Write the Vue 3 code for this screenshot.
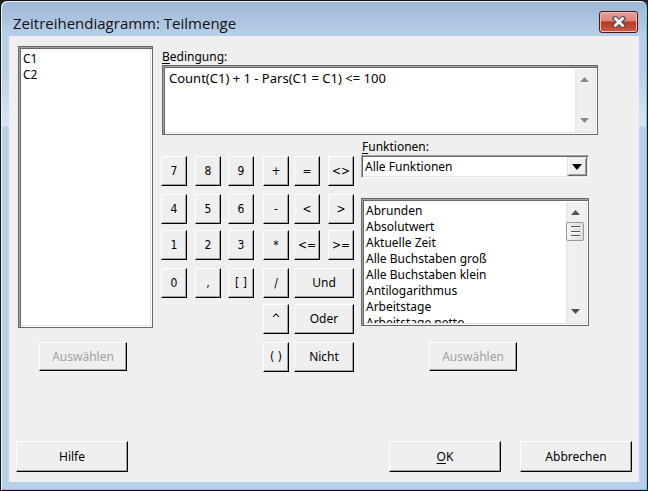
<script setup>
import { ref } from 'vue'

const keys = [
  ['7', 1, 1], ['8', 1, 2], ['9', 1, 3], ['+', 1, 4], ['=', 1, 5], ['<>', 1, 6],
  ['4', 2, 1], ['5', 2, 2], ['6', 2, 3], ['-', 2, 4], ['<', 2, 5], ['>', 2, 6],
  ['1', 3, 1], ['2', 3, 2], ['3', 3, 3], ['*', 3, 4], ['<=', 3, 5], ['>=', 3, 6],
  ['0', 4, 1], [',', 4, 2], ['[ ]', 4, 3], ['/', 4, 4], ['Und', 4, 5],
  ['^', 5, 4], ['Oder', 5, 5],
  ['( )', 6, 4], ['Nicht', 6, 5]
]
const isWord = (text) => /^[A-Z]/.test(text)
const columns = ['C1', 'C2']
const functions = [
  'Abrunden', 'Absolutwert', 'Aktuelle Zeit', 'Alle Buchstaben groß',
  'Alle Buchstaben klein', 'Antilogarithmus', 'Arbeitstage', 'Arbeitstage netto'
]
const condition = ref('Count(C1) + 1 - Pars(C1 = C1) <= 100')
const category = ref('Alle Funktionen')
const selectedColumn = ref(null)
const selectedFunction = ref(null)
</script>

<template>
  <main class="window">
    <header class="titlebar">
      <h1>Zeitreihendiagramm: Teilmenge</h1>
      <button class="close" type="button" aria-label="Schließen">
        <svg width="14" height="12" viewBox="0 0 14 12">
          <path d="M3.2 2.4L10.8 9.6M10.8 2.4L3.2 9.6" stroke="#4b4350" stroke-width="4.8" stroke-linecap="square" />
          <path d="M3.4 2.6L10.6 9.4M10.6 2.6L3.4 9.4" stroke="#f6f6f6" stroke-width="2.8" stroke-linecap="square" />
        </svg>
      </button>
    </header>

    <form class="content" @submit.prevent>
      <div class="upper">
        <section class="variables">
          <div class="sunken variable-box">
            <select v-model="selectedColumn" class="list" size="17" aria-label="Variablen">
              <option v-for="c in columns" :key="c">{{ c }}</option>
            </select>
          </div>
          <button class="btn pick" type="button" :disabled="!selectedColumn">Auswählen</button>
        </section>

        <section class="editor">
          <label for="condition"><u>B</u>edingung:</label>
          <div class="sunken condition-box">
            <textarea id="condition" v-model="condition" spellcheck="false"></textarea>
            <div class="scroll" aria-hidden="true">
              <svg class="arrow faded" viewBox="0 0 9 5"><path d="M4.5 0L9 5H0Z" /></svg>
              <svg class="arrow faded" viewBox="0 0 9 5"><path d="M0 0H9L4.5 5Z" /></svg>
            </div>
          </div>

          <div class="lower">
            <div class="keypad">
              <button
                v-for="[text, row, col] in keys"
                :key="text"
                type="button"
                class="btn key"
                :class="{ wide: isWord(text) }"
                :style="{ gridRow: row, gridColumn: col }"
              >{{ text }}</button>
            </div>

            <div class="functions">
              <label for="category"><u>F</u>unktionen:</label>
              <div class="combo">
                <select id="category" v-model="category">
                  <option>Alle Funktionen</option>
                </select>
                <span class="drop" aria-hidden="true">
                  <svg width="10" height="6" viewBox="0 0 10 6"><path d="M0 0H10L5 6Z" /></svg>
                </span>
              </div>
              <div class="sunken function-box">
                <select v-model="selectedFunction" class="list" size="8" aria-label="Funktionsliste">
                  <option v-for="f in functions" :key="f">{{ f }}</option>
                </select>
                <div class="scroll" aria-hidden="true">
                  <svg class="arrow" viewBox="0 0 9 5"><path d="M4.5 0L9 5H0Z" /></svg>
                  <span class="thumb">
                    <svg width="9" height="11" viewBox="0 0 9 11">
                      <path d="M0 .5H9M0 5.5H9M0 9.5H9" stroke="#555" />
                      <path d="M0 1.5H9M0 6.5H9M0 10.5H9" stroke="#fff" />
                    </svg>
                  </span>
                  <svg class="arrow last" viewBox="0 0 9 5"><path d="M0 0H9L4.5 5Z" /></svg>
                </div>
              </div>
              <button class="btn pick" type="button" :disabled="!selectedFunction">Auswählen</button>
            </div>
          </div>
        </section>
      </div>

      <footer class="actions">
        <button class="btn action help" type="button">Hilfe</button>
        <button class="btn action" type="submit"><span><u>O</u>K</span></button>
        <button class="btn action" type="button">Abbrechen</button>
      </footer>
    </form>
  </main>
</template>

<style>
body {
  margin: 0;
  background: #222;
}
</style>

<style scoped>
* {
  box-sizing: border-box;
}

.window {
  display: flex;
  flex-direction: column;
  min-height: 100vh;
  padding: 0 8px 8px;
  border: 1px solid #111;
  border-radius: 7px 7px 0 0;
  background: linear-gradient(#9db6d3, #b9d0ea 36px, #b9d0ea 70px, #d6e5f5 125px, #b9d0ea 126px, #b9d0ea);
  box-shadow: inset 1px 1px #eef6fc, inset -1px -1px #5cd0f0;
  font: 12px/16px "Noto Sans", "Open Sans", sans-serif;
  color: #000;
}

.titlebar {
  display: flex;
  align-items: flex-start;
  justify-content: space-between;
  height: 35px;
  padding: 10px 1px 0 4px;
}

h1 {
  margin: 0;
  font-family: "Open Sans", "Noto Sans", sans-serif;
  font-size: 15px;
  line-height: 24px;
  font-weight: 400;
  color: #111;
}

.close {
  display: flex;
  align-items: center;
  justify-content: center;
  width: 39px;
  height: 22px;
  padding: 0;
  border: 1px solid #4a1518;
  border-radius: 3px;
  background: linear-gradient(#e8a298, #d98478 47%, #b8361f 48%, #cc5c46);
  box-shadow: inset 0 0 0 1px #eebdb4;
}

.content {
  flex: 1;
  display: flex;
  flex-direction: column;
  justify-content: space-between;
  padding: 10px 7px;
  background: #efefef;
}

.upper {
  display: flex;
  gap: 8px;
  padding: 0 34px 0 2px;
}

.variables {
  display: flex;
  flex-direction: column;
  gap: 14px;
  width: 135px;
}

.variables .pick {
  margin-left: 21px;
}

.editor {
  flex: 1;
  padding-top: 3px;
}

label {
  display: block;
  padding-left: 1px;
}

u {
  text-underline-offset: 2px;
}

.sunken {
  display: flex;
  overflow: hidden;
  border: 1px solid #696969;
  background: #fff;
  box-shadow: inset 1px 1px #a0a0a0, inset 2px 2px #696969, inset -1px -1px #fff, inset -2px -2px #e3e3e3;
  padding: 3px 2px 2px 3px;
}

.variable-box {
  height: 282px;
}

.condition-box {
  height: 70px;
  margin-left: 1px;
}

.list,
textarea {
  flex: 1;
  min-width: 0;
  margin: 0;
  border: 0;
  border-radius: 0;
  outline: 0;
  background: #fff;
  color: #000;
  font: inherit;
  resize: none;
  overflow: hidden;
  scrollbar-width: none;
}

.list {
  padding: 0;
}

.list option {
  height: 16px;
  min-height: 16px;
  padding: 0 1px;
  font: inherit;
}

textarea {
  padding: 1px 3px;
  font-size: 13px;
}

.scroll {
  display: flex;
  flex-direction: column;
  align-items: center;
  justify-content: space-between;
  width: 20px;
  padding: 8px 2px 9px 0;
  background: linear-gradient(90deg, #e4e4e4, #f0f0f0 3px, #efefef);
}

.arrow {
  width: 9px;
  height: 5px;
  fill: #505050;
}

.faded {
  fill: #888;
}

.lower {
  display: flex;
  justify-content: space-between;
  padding-right: 9px;
}

.keypad {
  display: grid;
  grid-template-columns: 34px 33px 35px 31px 34px 26px;
  grid-template-rows: 38px 36px 38px 36px 38px 30px;
  padding-top: 21px;
}

.btn {
  padding: 0;
  border: 1px solid;
  border-color: #fff #000 #000 #fff;
  border-radius: 0;
  background: #efefef;
  box-shadow: inset -1px -1px #a0a0a0;
  color: #000;
  font: inherit;
  white-space: nowrap;
}

.btn:disabled {
  color: #a0a0a0;
}

.key {
  width: 26px;
  height: 30px;
  font-family: "DejaVu Sans Condensed", "Noto Sans", sans-serif;
}

.wide {
  width: 60px;
  font-family: inherit;
}

.pick {
  width: 88px;
  height: 29px;
}

.functions {
  display: flex;
  flex-direction: column;
  width: 228px;
  padding-top: 4px;
}

.combo {
  display: flex;
  height: 23px;
  padding: 1px;
  border: 1px solid;
  border-color: #a0a0a0 #fff #fff #a0a0a0;
  background: #fff;
  box-shadow: inset 1px 1px #696969, inset -1px -1px #e3e3e3;
}

.combo select {
  flex: 1;
  padding: 0 2px;
  border: 0;
  outline: 0;
  appearance: none;
  background: transparent;
  color: #000;
  font: inherit;
}

.drop {
  display: flex;
  align-items: center;
  justify-content: center;
  width: 20px;
  border: 1px solid;
  border-color: #e3e3e3 #696969 #696969 #e3e3e3;
  background: #efefef;
  box-shadow: inset 1px 1px #fff, inset -1px -1px #a0a0a0;
}

.function-box {
  height: 128px;
  margin: 20px 0 16px;
}

.functions .pick {
  margin-left: 68px;
}

.thumb {
  display: flex;
  align-items: center;
  justify-content: center;
  width: 18px;
  height: 19px;
  margin-top: 7px;
  border: 1px solid #999;
  border-radius: 2px;
  background: linear-gradient(90deg, #f5f5f5, #dcdcdc);
}

.last {
  margin-top: auto;
}

.actions {
  display: flex;
  gap: 19px;
}

.action {
  width: 112px;
  height: 31px;
}

.help {
  margin-right: auto;
}
</style>
